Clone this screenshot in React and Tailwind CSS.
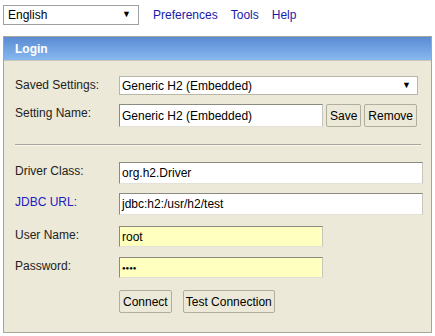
import React from "react";

const font = "font-['Liberation_Sans',Arial,sans-serif]";

const Field = ({ value, yellow, password, className = "" }) => (
  <div
    className={`flex items-center px-[2px] border border-t-[#8a8a80] border-l-[#8a8a80] border-r-[#c8c6bc] border-b-[#e4e2d8] text-[12px] text-black ${
      yellow ? "bg-[#ffffc0]" : "bg-white"
    } ${className}`}
  >
    {password ? (
      <span className="text-[6px] tracking-[0px] leading-none">●●●●</span>
    ) : (
      value
    )}
  </div>
);

const Btn = ({ children, tight }) => (
  <button
    className={`h-[23px] ${
      tight ? "px-[2px]" : "px-[3px]"
    } bg-[#ece9d8] border border-[#b0ae9f] rounded-[2px] text-[12px] text-black leading-none`}
  >
    {children}
  </button>
);

const Row = ({ label, blue, children, className = "" }) => (
  <div className={`flex items-start ${className}`}>
    <div
      className={`w-[104px] shrink-0 pt-[2px] leading-[14px] text-[12px] ${
        blue ? "text-[#2020c0]" : "text-[#222]"
      }`}
    >
      {label}
    </div>
    <div className="flex-1 flex gap-[3px]">{children}</div>
  </div>
);

export default function App() {
  return (
    <div className={`w-[435px] h-[336px] bg-white ${font} relative`}>
      <div className="flex items-center h-[30px] pl-[3px]">
        <div className="w-[136px] h-[20px] border border-[#a0a0a0] bg-white flex items-center justify-between px-[4px] text-[12px]">
          <span>English</span>
          <span className="text-[9px] mr-[3px]">▼</span>
        </div>
        <div className="flex gap-[13px] ml-[14px] text-[12px] text-[#1a1aa8]">
          <span>Preferences</span>
          <span>Tools</span>
          <span>Help</span>
        </div>
      </div>

      <div className="mx-[3px] mt-[6px] border border-[#a8a698] bg-[#ece9d8] h-[297px]">
        <div className="h-[24px] bg-gradient-to-b from-[#5a8bd3] to-[#88b8ef] border-b border-[#c8c6b8] flex items-center pl-[11px] text-[12px] text-white font-bold">
          Login
        </div>
        <div className="pl-[11px] pr-[10px] pt-[15px]">
          <Row label="Saved Settings:">
            <div className="w-[299px] h-[19px] bg-white border border-[#b8b6a8] flex items-center justify-between pl-[2px] pr-[6px] text-[12px]">
              <span>Generic H2 (Embedded)</span>
              <span className="text-[9px]">▼</span>
            </div>
          </Row>
          <Row label="Setting Name:" className="mt-[9px]">
            <Field value="Generic H2 (Embedded)" className="w-[204px] h-[23px]" />
            <Btn>Save</Btn>
            <Btn>Remove</Btn>
          </Row>
          <div className="mt-[17px] h-[2px] border-t border-[#a8a69a] border-b border-b-[#f8f6ee]" />
          <Row label="Driver Class:" className="mt-[16px]">
            <Field value="org.h2.Driver" className="w-[304px] h-[22px]" />
          </Row>
          <Row label="JDBC URL:" blue className="mt-[9px]">
            <Field value="jdbc:h2:/usr/h2/test" className="w-[304px] h-[22px]" />
          </Row>
          <Row label="User Name:" className="mt-[11px]">
            <Field value="root" yellow className="w-[204px] h-[21px]" />
          </Row>
          <Row label="Password:" className="mt-[10px]">
            <Field password yellow className="w-[204px] h-[21px]" />
          </Row>
          <div className="flex gap-[11px] mt-[12px] ml-[104px]">
            <Btn>Connect</Btn>
            <Btn tight>Test Connection</Btn>
          </div>
        </div>
      </div>
    </div>
  );
}
